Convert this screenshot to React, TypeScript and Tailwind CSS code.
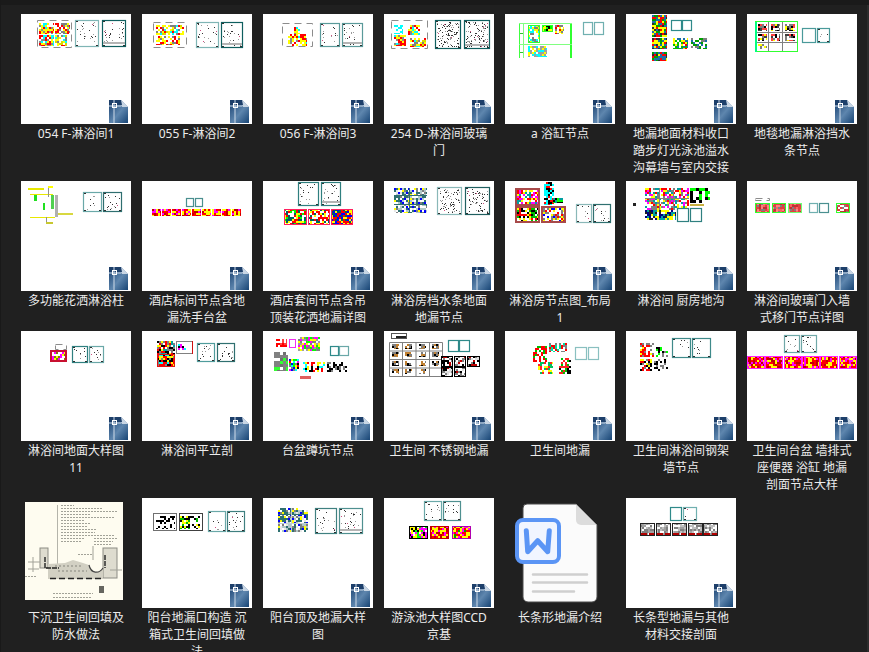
import { ReactNode } from "react";

type Box = [number, number, number, number];

const HOT = ["#ff0000", "#ffff00", "#ffff00", "#ff0000", "#8a8a8a", "#ffffff", "#ffffff", "#00ffff"];
const YEL = ["#ffff00", "#ffff00", "#ffffff", "#ff0000", "#d8d800", "#00ffff", "#808080", "#ffffff"];
const RED = ["#ff0000", "#ffff00", "#ff0000", "#ff00ff", "#ffff00", "#c00000"];
const BLU = ["#1f6fa8", "#ffff00", "#ffff00", "#ff0000", "#1f6fa8", "#2f2f2f", "#00a000"];
const TEAL = ["#2f6f70", "#ffffff", "#ffff00", "#808080", "#e8e8e8", "#2f6f70", "#b0c8c8", "#ffffff", "#0000ff"];
const SALMON = ["#e04040", "#ff6060", "#808080", "#c03030", "#ff8080", "#e04040"];
const BAND = ["#ffffff", "#e0e0e0", "#000000", "#c00000", "#ffffff", "#808080"];
const MIX = ["#ff0000", "#00ffff", "#ffff00", "#ff00ff", "#00ff00", "#808080", "#ffffff", "#0000ff", "#000000"];
const ROOM = ["#ffffff", "#ffffff", "#808080", "#404040", "#ff4040", "#ffff00", "#000000"];

// small fixed random so the noise is the same on every render
const rng = (seed: number) => () => {
  seed = (seed * 1664525 + 1013904223) >>> 0;
  return (seed >>> 16) / 65536;
};

const Mosaic = ({ b, colors, cell = 2, border }: { b: Box; colors: string[]; cell?: number; border?: string }) => {
  const [x0, y0, x1, y1] = b;
  const r = rng(x0 * 131 + y0 * 17 + x1 * 7 + y1);
  const tiles: ReactNode[] = [];
  for (let y = y0; y < y1; y += cell) {
    for (let x = x0; x < x1; x += cell) {
      tiles.push(
        <rect
          key={`${x}-${y}`}
          x={x}
          y={y}
          width={Math.min(cell, x1 - x)}
          height={Math.min(cell, y1 - y)}
          fill={colors[Math.floor(r() * colors.length)]}
        />
      );
    }
  }
  return (
    <g>
      <g filter="url(#soft)">{tiles}</g>
      {border && (
        <rect x={x0 + 0.5} y={y0 + 0.5} width={x1 - x0 - 1} height={y1 - y0 - 1} fill="none" stroke={border} />
      )}
    </g>
  );
};

const Sheet = ({ b, dots = 0, frame = "#4f9c9c", dark = false }: { b: Box; dots?: number; frame?: string; dark?: boolean }) => {
  const [x0, y0, x1, y1] = b;
  const w = x1 - x0;
  const h = y1 - y0;
  const r = rng(x0 * 37 + y0 * 11 + dots);
  const marks: ReactNode[] = [];
  for (let i = 0; i < dots; i++) {
    marks.push(
      <rect
        key={i}
        x={x0 + 2 + Math.floor(r() * (w - 4))}
        y={y0 + 2 + Math.floor(r() * (h - 4))}
        width={1}
        height={1}
        fill={r() > 0.93 ? "#d05080" : r() > 0.45 ? "#333333" : "#9a9a9a"}
      />
    );
  }
  return (
    <g>
      <rect x={x0 + 0.5} y={y0 + 0.5} width={w - 1} height={h - 1} fill="#ffffff" stroke={frame} strokeWidth="1.2" />
      {marks}
      {dots > 0 && (
        <g fill="#303030">
          <rect x={x0 + 1} y={y1 - 2} width={2} height={1} />
          <rect x={x1 - 3} y={y1 - 2} width={2} height={1} />
          <rect x={x0 + 1} y={y0 + 1} width={2} height={1} />
        </g>
      )}
      {dark && <rect x={x0 + 1} y={y1 - 5} width={w - 2} height={2} fill="#b4b4b4" />}
    </g>
  );
};

const Dash = ({ b }: { b: Box }) => {
  const [x0, y0, x1, y1] = b;
  return (
    <rect
      x={x0 + 0.5}
      y={y0 + 0.5}
      width={x1 - x0 - 1}
      height={y1 - y0 - 1}
      fill="none"
      stroke="#8c8c8c"
      strokeDasharray="7 5"
    />
  );
};

const Bar = ({ b, c }: { b: Box; c: string }) => (
  <rect x={b[0]} y={b[1]} width={b[2] - b[0]} height={b[3] - b[1]} fill={c} />
);

const DwgBadge = () => (
  <svg width="19" height="23" viewBox="0 0 19 23" className="absolute top-[86px] left-[88px]">
    <defs>
      <linearGradient id="dwg" x1="0" y1="0" x2="1" y2="1">
        <stop offset="0" stopColor="#163e6e" />
        <stop offset="0.55" stopColor="#5e86ae" />
        <stop offset="1" stopColor="#174474" />
      </linearGradient>
    </defs>
    <path d="M0 0H12L19 7V23H0Z" fill="url(#dwg)" />
    <path d="M12 0L19 7H13L12 5Z" fill="#c9d6e4" />
    <path d="M0 0H12L13 5H0Z" fill="#1d3f6a" />
    <path d="M5 0V23M0 6H12" stroke="#cfdbe8" strokeWidth="1" />
    <rect x="3.5" y="3.5" width="4" height="4" fill="none" stroke="#ffffff" />
  </svg>
);

const Drawing = ({ children, dy = 0 }: { children: ReactNode; dy?: number }) => (
  <div className="relative w-[110px] h-[110px] bg-white">
    <svg width="110" height="110" viewBox="0 0 110 110" className="absolute inset-0">
      <defs>
        <filter id="soft">
          <feGaussianBlur stdDeviation="0.55" />
        </filter>
      </defs>
      <g transform={`translate(0 ${dy})`}>{children}</g>
    </svg>
    <DwgBadge />
  </div>
);

const SunkenBathroom = () => (
  <div className="w-[110px] h-[110px] pt-1 pl-1">
    <svg width="98" height="98" viewBox="0 0 98 98" className="bg-[#fefcf0]">
      <path d="M32.5 3V75" stroke="#b4b4aa" fill="none" />
      <g stroke="#a2a298" strokeWidth="1" strokeDasharray="2 1">
        <path d="M36 3.5H49M36 6.5H78M36 9.5H92M36 12.5H66M36 15.5H90M36 18.5H60M36 21.5H66M36 24.5H62M36 27.5H72M36 30.5H70M36 33.5H90M36 36.5H60M36 39.5H56" />
        <path d="M69 36.5H92M69 39.5H88M69 42.5H86" />
        <path d="M53 52.5H68M28 91.5H68M28 95.5H66M0 74.5H11" />
      </g>
      <path d="M68 44V58" stroke="#a2a298" />
      <rect x="15" y="46" width="8" height="20" fill="#dedccf" stroke="#8c8c84" />
      <rect x="78" y="46" width="14" height="30" fill="#dedccf" stroke="#8c8c84" />
      <path d="M23 62L40 61L48 58L58 61L64 63C66 72 74 72 78 66V77H23Z" fill="#d2d0c3" />
      <path d="M3 60H15M8 55V70M85 68H97M3 67H14" stroke="#a2a298" fill="none" />
      <path d="M64 63C66 72 74 72 78 66" stroke="#444444" fill="none" strokeWidth="1.2" />
      <path d="M25 76.5H78" stroke="#222222" strokeWidth="1.4" strokeDasharray="6 3" />
      <path d="M20 55V66H34M80 53V66" stroke="#222222" strokeWidth="1.4" fill="none" strokeDasharray="5 1" />
      <path d="M33 69H62M30 64H58" stroke="#85857c" strokeDasharray="2 2" />
      <rect x="74" y="84" width="5" height="7" fill="#666660" />
    </svg>
  </div>
);

const WordDoc = () => (
  <svg width="110" height="110" viewBox="0 0 110 110">
    <path
      d="M22 6H71L92 27V99a5 5 0 0 1-5 5H23a5 5 0 0 1-5-5V10a4 4 0 0 1 4-4Z"
      fill="#fbfbfb"
      stroke="#4a4a4a"
      strokeWidth="1"
    />
    <path d="M71 6L92 27H76a5 5 0 0 1-5-5Z" fill="#dcdcdc" />
    <rect x="12" y="22" width="42" height="42" rx="6" fill="#f1f5ff" stroke="#5b95f5" strokeWidth="4" />
    <path
      d="M21.3 32.7L22.7 53.7L32.7 42.7L42.7 53.7L44.3 32.7"
      fill="none"
      stroke="#5b95f5"
      strokeWidth="5"
      strokeLinecap="round"
      strokeLinejoin="round"
    />
    <path d="M28 76.5H82M28 84.5H82M28 93.5H69" stroke="#cfcfcf" strokeWidth="2.5" strokeLinecap="round" />
  </svg>
);

const items: { label: string; thumb: ReactNode }[] = [
  {
    label: "054 F-淋浴间1",
    thumb: (
      <Drawing>
        <Dash b={[16, 6, 51, 34]} />
        <Mosaic b={[18, 9, 33, 20]} colors={HOT} />
        <Mosaic b={[34, 9, 49, 20]} colors={["#ff0000", "#ff0000", "#ffff00", "#808080", "#ffffff"]} />
        <Mosaic b={[18, 21, 33, 32]} colors={HOT} />
        <Mosaic b={[34, 21, 46, 32]} colors={YEL} />
        <Sheet b={[54, 6, 78, 33]} dots={26} frame="#7fb5b5" />
        <Sheet b={[81, 6, 105, 33]} dots={30} frame="#0f5f5f" dark />
      </Drawing>
    ),
  },
  {
    label: "055 F-淋浴间2",
    thumb: (
      <Drawing>
        <Dash b={[11, 8, 45, 34]} />
        <Mosaic b={[14, 11, 42, 21]} colors={YEL} />
        <Mosaic b={[14, 22, 38, 31]} colors={["#ffff00", "#ffffff", "#ff0000", "#ffffff", "#808080"]} />
        <Sheet b={[54, 8, 77, 34]} dots={22} frame="#7fb5b5" />
        <Sheet b={[79, 8, 101, 34]} dots={26} frame="#0f5f5f" dark />
      </Drawing>
    ),
  },
  {
    label: "056 F-淋浴间3",
    thumb: (
      <Drawing>
        <Dash b={[19, 9, 50, 33]} />
        <Mosaic b={[25, 20, 44, 32]} colors={HOT} />
        <Mosaic b={[31, 13, 37, 20]} colors={HOT} />
        <Sheet b={[57, 9, 77, 33]} dots={16} frame="#5a9a9a" />
        <Sheet b={[79, 9, 100, 33]} dots={22} frame="#5a9a9a" dark />
      </Drawing>
    ),
  },
  {
    label: "254 D-淋浴间玻璃门",
    thumb: (
      <Drawing>
        <Dash b={[7, 6, 44, 35]} />
        <Mosaic b={[10, 11, 19, 20]} colors={["#00ffff", "#ffffff", "#00ffff"]} />
        <Mosaic b={[24, 11, 36, 21]} colors={HOT} />
        <Mosaic b={[10, 21, 22, 32]} colors={HOT} />
        <Mosaic b={[26, 24, 42, 33]} colors={YEL} />
        <Sheet b={[51, 6, 77, 35]} dots={110} frame="#0f5f5f" />
        <Sheet b={[80, 6, 106, 35]} dots={110} frame="#0f5f5f" dark />
      </Drawing>
    ),
  },
  {
    label: "a 浴缸节点",
    thumb: (
      <Drawing>
        <Bar b={[14, 9, 15, 44]} c="#40ff40" />
        <Bar b={[18, 9, 19, 44]} c="#80ff80" />
        <Bar b={[65, 9, 67, 44]} c="#30ff30" />
        <Bar b={[14, 9, 67, 10]} c="#80ff80" />
        <Bar b={[14, 30, 67, 31]} c="#80ff80" />
        <Bar b={[15, 19, 18, 20]} c="#30c030" />
        <Bar b={[15, 38, 18, 39]} c="#30c030" />
        <Mosaic b={[23, 11, 35, 29]} colors={["#808080", "#00ffff", "#ffffff", "#ffff00", "#ffffff"]} border="#30ff30" />
        <Mosaic b={[37, 11, 48, 18]} colors={["#000000", "#00ff00", "#00a0a0", "#ffff00"]} border="#30ff30" />
        <Mosaic b={[50, 11, 59, 20]} colors={["#808080", "#ffff00", "#ff0000", "#ffffff"]} />
        <Mosaic b={[23, 32, 42, 43]} colors={["#a0a0a0", "#ffffff", "#ffff00", "#00ffff", "#a0a0a0"]} />
        <Sheet b={[78, 8, 88, 21]} frame="#70b0b0" />
        <Sheet b={[89, 8, 99, 21]} frame="#70b0b0" />
      </Drawing>
    ),
  },
  {
    label: "地漏地面材料收口踏步灯光泳池溢水沟幕墙与室内交接",
    thumb: (
      <Drawing>
        <Mosaic b={[26, 1, 41, 13]} colors={BLU} />
        <Mosaic b={[26, 13, 41, 23]} colors={BLU} />
        <Mosaic b={[26, 24, 41, 35]} colors={BLU} />
        <Mosaic b={[26, 38, 41, 47]} colors={BLU} />
        <Mosaic b={[47, 24, 62, 35]} colors={["#1f6fa8", "#ffffff", "#ff0000", "#00c000", "#ffff00"]} />
        <Mosaic b={[65, 24, 81, 35]} colors={["#1f6fa8", "#ffffff", "#00a000", "#ffffff", "#808080"]} />
        <Sheet b={[45, 6, 56, 17]} frame="#2f8a8a" />
        <Sheet b={[56, 6, 66, 17]} frame="#2f8a8a" />
      </Drawing>
    ),
  },
  {
    label: "地毯地漏淋浴挡水条节点",
    thumb: (
      <Drawing>
        <Mosaic b={[11, 10, 20, 17]} colors={ROOM} />
        <Mosaic b={[24, 10, 33, 17]} colors={ROOM} />
        <Mosaic b={[38, 10, 48, 17]} colors={ROOM} />
        <Mosaic b={[11, 20, 20, 27]} colors={ROOM} />
        <Mosaic b={[24, 20, 33, 27]} colors={ROOM} />
        <Mosaic b={[38, 20, 48, 27]} colors={ROOM} />
        <Mosaic b={[11, 30, 20, 35]} colors={["#ffff00", "#ffffff", "#808080", "#ff8000"]} />
        <rect x="8.5" y="7.5" width="42" height="30" fill="none" stroke="#30ff30" />
        <Bar b={[9, 18, 50, 19]} c="#808080" />
        <Bar b={[9, 28, 50, 29]} c="#808080" />
        <Bar b={[21, 8, 22, 37]} c="#808080" />
        <Bar b={[35, 8, 36, 37]} c="#808080" />
        <Bar b={[8, 8, 10, 38]} c="#00ff80" />
        <Sheet b={[55, 14, 69, 29]} frame="#4a9a9a" />
        <Sheet b={[70, 14, 83, 29]} dots={3} frame="#4a9a9a" />
      </Drawing>
    ),
  },
  {
    label: "多功能花洒淋浴柱",
    thumb: (
      <Drawing>
        <Bar b={[7, 7, 23, 9]} c="#e8e800" />
        <Bar b={[27, 5, 32, 7]} c="#ffff00" />
        <Bar b={[9, 13, 32, 14]} c="#e8e800" />
        <Bar b={[9, 36, 34, 37]} c="#e8e800" />
        <Bar b={[34, 32, 52, 34]} c="#d8d840" />
        <Bar b={[27, 7, 28, 16]} c="#909090" />
        <Bar b={[34, 14, 37, 36]} c="#b0b0b0" />
        <Bar b={[25, 36, 26, 42]} c="#909090" />
        <Bar b={[25, 41, 32, 43]} c="#c8c830" />
        <Bar b={[13, 14, 16, 20]} c="#20e020" />
        <Bar b={[22, 22, 24, 29]} c="#20e020" />
        <Bar b={[30, 14, 33, 28]} c="#50d050" />
        <Sheet b={[62, 11, 81, 31]} dots={7} frame="#6aa8a8" />
        <Sheet b={[82, 11, 101, 31]} dots={16} frame="#2f6f70" />
      </Drawing>
    ),
  },
  {
    label: "酒店标间节点含地漏洗手台盆",
    thumb: (
      <Drawing>
        <Sheet b={[44, 17, 52, 26]} frame="#4a8f8f" />
        <Sheet b={[53, 17, 61, 26]} frame="#4a8f8f" />
        {[10, 20, 30, 40, 50, 60, 70, 80, 90].map((x) => (
          <Mosaic key={x} b={[x, 28, x + 9, 35]} colors={RED} />
        ))}
      </Drawing>
    ),
  },
  {
    label: "酒店套间节点含吊顶装花洒地漏详图",
    thumb: (
      <Drawing>
        <Sheet b={[35, 1, 56, 25]} dots={16} frame="#2f7f7f" />
        <Sheet b={[58, 1, 78, 25]} dots={20} frame="#2f7f7f" dark />
        <Mosaic b={[21, 28, 44, 44]} colors={["#ff0000", "#ffff00", "#006060", "#00ff00", "#ffffff"]} border="#ff2060" />
        <Mosaic b={[45, 28, 67, 44]} colors={["#ff0000", "#ffff00", "#006060", "#ffffff"]} border="#ff2060" />
        <Mosaic b={[68, 28, 90, 44]} colors={["#ff0000", "#ffff00", "#006060", "#0000ff"]} border="#ff2060" />
      </Drawing>
    ),
  },
  {
    label: "淋浴房档水条地面地漏节点",
    thumb: (
      <Drawing>
        <Mosaic b={[10, 7, 43, 32]} colors={TEAL} />
        <Bar b={[10, 14, 43, 15]} c="#2f6f70" />
        <Bar b={[10, 23, 43, 24]} c="#2f6f70" />
        <Bar b={[25, 7, 26, 32]} c="#2f6f70" />
        <Sheet b={[53, 6, 78, 34]} dots={70} frame="#8ab8b8" />
        <Sheet b={[81, 6, 106, 34]} dots={70} frame="#1f5f60" />
      </Drawing>
    ),
  },
  {
    label: "淋浴房节点图_布局1",
    thumb: (
      <Drawing>
        <Mosaic b={[10, 7, 35, 25]} colors={["#ffffff", "#ffffff", "#ff00ff", "#00a0a0", "#ffff00", "#ff0000"]} />
        <rect x="11" y="8" width="23" height="16" fill="none" stroke="#a84a4a" strokeWidth="2" />
        <Mosaic b={[10, 25, 35, 42]} colors={["#ffffff", "#ffffff", "#000000", "#00c000", "#ffff00", "#ff0000"]} />
        <rect x="11" y="26" width="23" height="15" fill="none" stroke="#a84a4a" strokeWidth="2" />
        <Mosaic b={[36, 25, 61, 42]} colors={["#ffffff", "#ffffff", "#0000ff", "#ffff00", "#ff0000", "#808080"]} />
        <rect x="37" y="26" width="23" height="15" fill="none" stroke="#a84a4a" strokeWidth="2" />
        <Mosaic b={[39, 1, 49, 24]} colors={["#00ffff", "#ffffff", "#ff0000", "#00ffff", "#000000"]} />
        <Mosaic b={[48, 17, 58, 22]} colors={["#00ff00", "#000000", "#00a0a0"]} />
        <Sheet b={[71, 23, 87, 42]} dots={6} frame="#8ab8b8" />
        <Sheet b={[88, 23, 106, 42]} dots={12} frame="#2f7070" />
      </Drawing>
    ),
  },
  {
    label: "淋浴间 厨房地沟",
    thumb: (
      <Drawing>
        <Bar b={[7, 22, 10, 25]} c="#222222" />
        <Mosaic b={[19, 7, 63, 29]} colors={["#00a0a0", "#ffffff", "#ff0000", "#ffff00", "#ffffff", "#808080", "#ff00ff"]} />
        <Bar b={[19, 17, 63, 18]} c="#808080" />
        <Bar b={[33, 7, 34, 29]} c="#808080" />
        <Bar b={[47, 7, 48, 29]} c="#808080" />
        <Mosaic b={[19, 29, 50, 39]} colors={["#00a0a0", "#ffff00", "#000080", "#ffffff", "#202020"]} />
        <Mosaic b={[64, 7, 84, 22]} colors={["#ffffff", "#ffffff", "#000000", "#00ff00"]} cell={3} />
        <Bar b={[64, 23, 78, 25]} c="#c8b040" />
        <Sheet b={[51, 27, 63, 41]} frame="#2f8080" />
        <Sheet b={[64, 27, 76, 41]} frame="#2f8080" />
      </Drawing>
    ),
  },
  {
    label: "淋浴间玻璃门入墙式移门节点详图",
    thumb: (
      <Drawing>
        <Dash b={[8, 17, 23, 20]} />
        <Mosaic b={[8, 22, 23, 32]} colors={SALMON} border="#30ff30" />
        <Mosaic b={[25, 22, 39, 32]} colors={SALMON} border="#30ff30" />
        <Mosaic b={[41, 22, 55, 32]} colors={SALMON} border="#70ff70" />
        <Sheet b={[62, 22, 71, 32]} frame="#70b0b0" />
        <Sheet b={[72, 22, 82, 32]} frame="#4a9090" />
        <Mosaic b={[89, 22, 103, 32]} colors={["#ffffff", "#c03030", "#808080", "#e04040"]} border="#30ff30" />
      </Drawing>
    ),
  },
  {
    label: "淋浴间地面大样图11",
    thumb: (
      <Drawing dy={1}>
        <Dash b={[34, 12, 46, 18]} />
        <Mosaic b={[29, 18, 46, 30]} colors={["#ffffff", "#ffff00", "#808000", "#ffffff", "#ff00ff"]} />
        <rect x="30" y="19" width="15" height="10" fill="none" stroke="#c81030" strokeWidth="2" />
        <Sheet b={[51, 14, 67, 31]} dots={8} frame="#2f8080" />
        <Sheet b={[68, 14, 83, 31]} dots={10} frame="#6aa8a8" />
      </Drawing>
    ),
  },
  {
    label: "淋浴间平立剖",
    thumb: (
      <Drawing dy={1}>
        <Mosaic b={[15, 9, 33, 22]} colors={["#000000", "#ffff00", "#808080", "#ff0000", "#ffffff", "#00a0a0"]} />
        <Mosaic b={[15, 22, 33, 35]} colors={["#000000", "#ff0000", "#00ffff", "#ffff00", "#808080"]} />
        <rect x="15.5" y="22.5" width="17" height="12" fill="none" stroke="#e01010" />
        <rect x="34.5" y="9.5" width="16" height="12" fill="#ffffff" stroke="#808080" />
        <Mosaic b={[36, 12, 44, 18]} colors={["#ff00ff", "#00ffff", "#000000", "#ffffff"]} />
        <Bar b={[50, 9, 51, 22]} c="#d01010" />
        <Sheet b={[55, 11, 73, 30]} dots={12} frame="#4f9c9c" />
        <Sheet b={[75, 11, 93, 30]} dots={16} frame="#2f7070" />
      </Drawing>
    ),
  },
  {
    label: "台盆蹲坑节点",
    thumb: (
      <Drawing dy={1}>
        <Mosaic b={[13, 7, 24, 15]} colors={["#ff0000", "#ffffff", "#ff4040"]} />
        <rect x="26.5" y="7.5" width="6" height="8" fill="none" stroke="#f030f0" />
        <Mosaic b={[35, 5, 57, 19]} colors={["#808080", "#ffffff", "#00ff00", "#ffff00", "#a0a0a0", "#ff00ff"]} />
        <Mosaic b={[11, 20, 25, 39]} colors={["#808080", "#808080", "#707070", "#30ff30", "#ffffff"]} cell={3} />
        <Mosaic b={[26, 27, 36, 39]} colors={MIX} />
        <Mosaic b={[40, 30, 62, 40]} colors={["#ffffff", "#000000", "#ff0000", "#00ffff", "#ffff00", "#ffffff"]} />
        <Mosaic b={[64, 30, 84, 40]} colors={["#000000", "#ffffff", "#ffffff", "#808080"]} />
        <Bar b={[37, 44, 48, 47]} c="#e06060" />
        <Sheet b={[67, 14, 76, 24]} frame="#2f8a8a" />
        <Sheet b={[76, 14, 86, 24]} frame="#6aa8a8" />
      </Drawing>
    ),
  },
  {
    label: "卫生间 不锈钢地漏",
    thumb: (
      <Drawing dy={1}>
        <rect x="7.5" y="1.5" width="15" height="5" fill="#ffffff" stroke="#555555" />
        <Bar b={[12, 4, 22, 6]} c="#202020" />
        <Bar b={[5, 10, 58, 44]} c="#ffffff" />
        {[
          [7, 12], [20, 12], [34, 12], [47, 12],
          [7, 20], [20, 20], [34, 20], [47, 20],
          [7, 29], [20, 29], [34, 29], [47, 29],
          [7, 37], [20, 37], [34, 37],
        ].map(([x, y]) => (
          <Mosaic key={`${x}${y}`} b={[x + 1, y, x + 8, y + 5]} colors={["#000000", "#ffffff", "#c08030", "#808080"]} />
        ))}
        <path d="M5.5 10.5H58.5V44.5H5.5ZM18.5 10V44M32 10V44M45.5 10V44M5 19H58M5 27.5H58M5 36H58" fill="none" stroke="#808080" />
        <Sheet b={[64, 8, 75, 20]} frame="#2f8a8a" />
        <Sheet b={[75, 8, 86, 20]} frame="#2f8a8a" />
        {([
          [57, 24, 69, 35], [70, 24, 82, 35], [83, 24, 96, 35], [57, 35, 69, 45], [70, 35, 82, 45],
        ] as Box[]).map((b) => (
          <Mosaic key={b.join()} b={b} colors={BAND} border="#000000" />
        ))}
      </Drawing>
    ),
  },
  {
    label: "卫生间地漏",
    thumb: (
      <Drawing dy={1}>
        <Mosaic b={[28, 12, 42, 30]} colors={["#ffffff", "#ff0000", "#ff0000", "#00c000", "#ffffff"]} />
        <Mosaic b={[44, 11, 62, 20]} colors={["#ffffff", "#ffffff", "#00e0a0", "#808080", "#ff0000"]} />
        <Mosaic b={[33, 30, 48, 42]} colors={["#ffffff", "#ffffff", "#ff2020", "#ffff00", "#00c060"]} />
        <Mosaic b={[54, 26, 66, 42]} colors={["#ffffff", "#ffffff", "#ff2020", "#00c000", "#000000"]} />
        <Sheet b={[70, 15, 82, 28]} frame="#8ac0c0" />
        <Sheet b={[83, 15, 94, 28]} frame="#8ac0c0" />
      </Drawing>
    ),
  },
  {
    label: "卫生间淋浴间钢架墙节点",
    thumb: (
      <Drawing dy={1}>
        <Mosaic b={[14, 11, 28, 25]} colors={["#ff0000", "#ffffff", "#ffff00", "#808080", "#ffffff"]} />
        <Mosaic b={[30, 15, 42, 25]} colors={["#ffffff", "#ffffff", "#808080", "#00ff00", "#000000"]} />
        <Mosaic b={[14, 27, 26, 39]} colors={["#ffffff", "#ffff00", "#000000", "#808080", "#ff0000"]} />
        <Mosaic b={[28, 27, 42, 39]} colors={["#ffffff", "#000000", "#808080", "#ffffff"]} />
        <Sheet b={[46, 6, 65, 26]} dots={6} frame="#3f8a8a" />
        <Sheet b={[66, 6, 85, 26]} dots={8} frame="#3f8a8a" />
      </Drawing>
    ),
  },
  {
    label: "卫生间台盆 墙排式座便器 浴缸 地漏剖面节点大样",
    thumb: (
      <Drawing dy={1}>
        <Sheet b={[37, 3, 53, 21]} dots={8} frame="#70a8a8" />
        <Sheet b={[54, 3, 70, 21]} dots={10} frame="#70a8a8" />
        {[0, 18, 37, 55, 73, 92].map((x) => (
          <Mosaic key={x} b={[x, 24, Math.min(x + 18, 110), 37]} colors={RED} border="#ff20ff" />
        ))}
      </Drawing>
    ),
  },
  { label: "下沉卫生间回填及防水做法", thumb: <SunkenBathroom /> },
  {
    label: "阳台地漏口构造 沉箱式卫生间回填做法",
    thumb: (
      <Drawing>
        <Mosaic b={[14, 18, 33, 31]} colors={["#ffffff", "#000000", "#000000", "#ffffff", "#ffffff"]} />
        <Mosaic b={[38, 18, 58, 31]} colors={["#ffffff", "#000000", "#ffff00", "#00c000", "#ffffff", "#ffffff"]} />
        <rect x="11.5" y="15.5" width="23" height="17" fill="none" stroke="#707070" />
        <rect x="37.5" y="15.5" width="23" height="17" fill="none" stroke="#404040" />
        <Sheet b={[66, 13, 84, 34]} dots={8} frame="#6aa8a8" />
        <Sheet b={[85, 13, 103, 34]} dots={14} frame="#3f8080" />
      </Drawing>
    ),
  },
  {
    label: "阳台顶及地漏大样图",
    thumb: (
      <Drawing>
        <Mosaic b={[15, 10, 45, 34]} colors={TEAL} />
        <Bar b={[15, 16, 45, 17]} c="#2f6f70" />
        <Bar b={[15, 25, 45, 26]} c="#c0d0d0" />
        <Bar b={[28, 10, 29, 34]} c="#c0d0d0" />
        <Sheet b={[52, 10, 74, 36]} dots={18} frame="#3f8080" />
        <Sheet b={[76, 10, 100, 36]} dots={28} frame="#4f9090" dark />
      </Drawing>
    ),
  },
  {
    label: "游泳池大样图CCD京基",
    thumb: (
      <Drawing>
        <Sheet b={[40, 3, 58, 23]} dots={10} frame="#6aa8a8" />
        <Sheet b={[59, 3, 77, 23]} dots={12} frame="#4f9090" />
        <Mosaic b={[25, 28, 44, 41]} colors={["#ffff00", "#00ff00", "#000000", "#ff00ff", "#ffff00", "#ffffff"]} border="#000000" />
        <Mosaic b={[46, 28, 65, 41]} colors={["#ffff00", "#ff0000", "#ff00ff", "#ffff00", "#c00000"]} border="#c00000" />
        <Mosaic b={[68, 28, 87, 41]} colors={["#ffff00", "#ff00ff", "#ff0000", "#00a000", "#ffff00"]} border="#b000b0" />
      </Drawing>
    ),
  },
  { label: "长条形地漏介绍", thumb: <WordDoc /> },
  {
    label: "长条型地漏与其他材料交接剖面",
    thumb: (
      <Drawing>
        <Sheet b={[44, 9, 56, 23]} frame="#2f8a8a" />
        <Sheet b={[57, 9, 71, 23]} dots={2} frame="#70b0b0" />
        {[14, 30, 46, 62, 77].map((x) => (
          <g key={x}>
            <Mosaic b={[x, 25, x + 15, 38]} colors={["#a0a0a0", "#808080", "#c0c0c0", "#ffffff"]} />
            <Bar b={[x + 1, 35, x + 7, 37]} c="#b00000" />
            <Bar b={[x + 9, 35, x + 14, 37]} c="#b00000" />
            <rect x={x + 0.5} y="25.5" width="14" height="12" fill="none" stroke="#222222" />
          </g>
        ))}
      </Drawing>
    ),
  },
];

export default function App() {
  return (
    <div className="relative w-[869px] h-[652px] overflow-hidden bg-[#202020] border-l border-[#191919] font-['Noto_Sans','Noto_Sans_CJK_SC',sans-serif]">
      <div className="h-[5px] bg-[#1a1a1a]" />
      <div className="grid grid-cols-[repeat(7,121px)] items-start pt-[9px] pl-5">
        {items.map((item) => (
          <div key={item.label} className="w-[110px] pb-[5px]">
            {item.thumb}
            <p className="w-[102px] mx-auto pt-px text-center text-xs leading-[17px] text-[#ececec]">
              {item.label}
            </p>
          </div>
        ))}
      </div>
      <div className="absolute top-[5px] right-0 w-[2px] h-[647px] bg-[#2c2c2c]" />
    </div>
  );
}
